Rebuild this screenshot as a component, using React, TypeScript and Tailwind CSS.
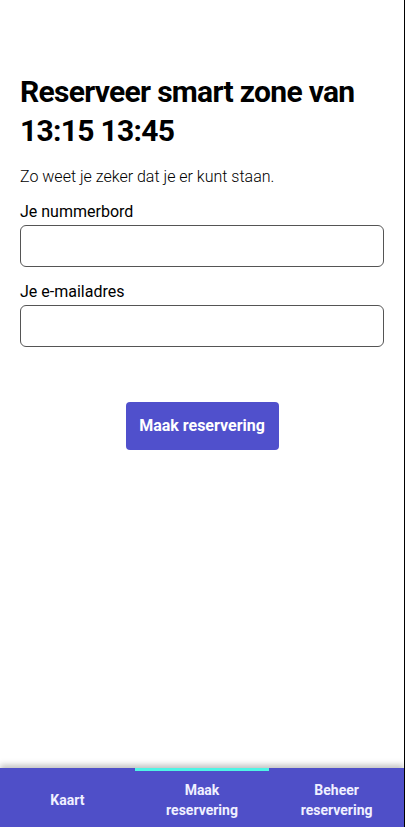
import { useState } from "react";

const display = "font-['Roboto','Liberation_Sans',sans-serif]";

function Field({ label, value, onChange }: { label: string; value: string; onChange: (v: string) => void }) {
  return (
    <label className="block">
      <span className="block text-[16px] leading-[20px] text-black">{label}</span>
      <input
        value={value}
        onChange={(e) => onChange(e.target.value)}
        className="mt-[3px] block h-[42px] w-full rounded-[6px] border border-[#555] bg-white px-3 text-[16px] outline-none"
      />
    </label>
  );
}

export default function App() {
  const [plate, setPlate] = useState("");
  const [email, setEmail] = useState("");
  const tabs = [
    { label: ["Kaart"], active: false },
    { label: ["Maak", "reservering"], active: true },
    { label: ["Beheer", "reservering"], active: false },
  ];

  return (
    <div className="relative h-[827px] w-[405px] overflow-hidden border-r border-black bg-white font-['Roboto',sans-serif]">
      <main className="px-5 pt-[72px]">
        <h1 className={`${display} text-[30px] font-bold leading-[39px] tracking-[-0.7px] text-black`}>
          Reserveer smart zone van 13:15 13:45
        </h1>
        <p className="mt-[17px] text-[16px] font-light leading-[20px] text-black">
          Zo weet je zeker dat je er kunt staan.
        </p>
        <div className="mt-[15px] flex flex-col gap-[15px]">
          <Field label="Je nummerbord" value={plate} onChange={setPlate} />
          <Field label="Je e-mailadres" value={email} onChange={setEmail} />
        </div>
        <div className="mt-[55px] flex justify-center">
          <button className={`${display} h-[48px] w-[153px] rounded-[4px] bg-[#5050cc] text-[16px] font-bold text-white`}>
            Maak reservering
          </button>
        </div>
      </main>

      <nav className="absolute bottom-0 left-0 right-0 grid h-[59px] grid-cols-3 bg-[#4f4fc8] shadow-[0_-3px_6px_rgba(0,0,0,0.25)]">
        {tabs.map((t) => (
          <div key={t.label.join(" ")} className="relative flex flex-col items-center justify-center pt-[4px]">
            {t.active && <div className="absolute left-0 right-0 top-0 h-[3px] bg-[#4ff5e6]" />}
            {t.label.map((l) => (
              <span key={l} className={`${display} text-[14px] font-bold leading-[20px] text-[#f0f0ff]`}>
                {l}
              </span>
            ))}
          </div>
        ))}
      </nav>
    </div>
  );
}
